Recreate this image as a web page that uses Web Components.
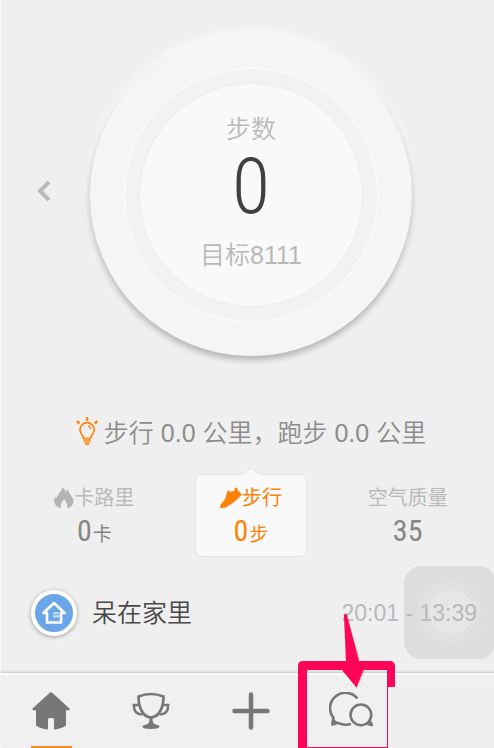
<!DOCTYPE html>
<html lang="zh-CN">
<head>
<meta charset="utf-8">
<meta name="viewport" content="width=device-width, initial-scale=1">
<title>步数</title>
<style>
  html { background: #efefef; --digits: "Liberation Sans Narrow", "Roboto Condensed", "Open Sans Condensed", "Noto Sans ExtraCondensed", "Noto Sans Condensed", "Roboto", sans-serif; }
  body { margin: 0; overflow-x: hidden; overflow-y: hidden; }
</style>
</head>
<body>
<step-app></step-app>
<script>
const define = (name, html) => customElements.define(name, class extends HTMLElement {
  constructor() {
    super();
    const t = document.createElement('template');
    t.innerHTML = html;
    this.attachShadow({ mode: 'open' }).append(t.content.cloneNode(true));
  }
});

define('step-dial', `
<style>
  :host { display: flex; justify-content: center; }
  .outer, .groove, .face { border-radius: 50%; box-sizing: border-box; display: flex; align-items: center; justify-content: center; }
  .outer { width: 322px; aspect-ratio: 1; background: #f5f5f5; box-shadow: 0 4px 6px rgba(0,0,0,.26), 0 -3px 8px rgba(255,255,255,.9), 0 -1px 2px #fafafa; }
  .groove { width: 254px; aspect-ratio: 1; background: #f2f2f2; border: 1px solid #fdfdfd; }
  .face { width: 224px; aspect-ratio: 1; background: #f9f9f9; border: 1px solid #ececec; flex-direction: column; padding-bottom: 6px; color: #b9b9b9; font-size: 25px; line-height: 36px; font-weight: 350; }
  .value { color: #404040; font: 300 78px/76px var(--digits); padding: 2px 0 12px; }
</style>
<div class="outer"><div class="groove"><div class="face">
  <slot name="label"></slot><span class="value"><slot></slot></span><slot name="goal"></slot>
</div></div></div>`);

define('tip-line', `
<style>
  :host { display: flex; align-items: center; justify-content: center; gap: 6px; color: #8c8c8c; font-size: 25px; line-height: 36px; font-weight: 350; white-space: nowrap; }
  svg { flex: none; margin-bottom: 4px; }
</style>
<svg width="22" height="28" viewBox="0 0 22 28" fill="none" stroke="#ff8208" stroke-width="1.7">
  <path d="M7.6 21.5C7.6 18.5 4 17 4 12.8a7.1 7.1 0 0 1 14.2 0c0 4.2-3.8 5.700-3.800 8.700z"/>
  <path d="M12 9.200q2.500.5 2.800 3" stroke-width="1.300"/>
  <path d="M7.300 23.200h7.600M7.800 25.200h6.600M9 27h4.200" stroke-width="1.300"/>
  <path d="M11.100.3v3.400M.9 4.200l2.600 2.300M21.300 4.200l-2.600 2.300" stroke-width="2.400"/>
</svg><slot></slot>`);

define('metric-tile', `
<style>
  :host { display: flex; justify-content: center; }
  button { position: relative; box-sizing: border-box; width: 112px; height: 83px; padding: 9px 0 0; border: 1px solid transparent; border-radius: 7px; background: none; font: inherit; color: #b9b9b9; display: flex; flex-direction: column; align-items: center; white-space: nowrap; }
  .label { display: flex; align-items: center; font-size: 20px; line-height: 28px; }
  .value { display: flex; align-items: baseline; color: #858585; font-size: 19px; line-height: 38px; gap: 1px; }
  .num { font: 400 30px/38px var(--digits); }
  :host([active]) button { background: #f9f9f9; border-color: #e4e4e4; color: #ff8208; }
  :host([active]) .value { color: #ff8208; }
  .tip { display: none; position: absolute; top: -7px; left: 46px; }
  :host([active]) .tip { display: block; }
</style>
<button type="button">
  <svg class="tip" width="18" height="8" viewBox="0 0 18 8"><path d="M0 7 8 .8q1-.6 2 0L18 7v1H0z" fill="#f9f9f9"/><path d="M0 6.500 8 .8q1-.6 2 0L18 6.500" fill="none" stroke="#e4e4e4"/></svg>
  <span class="label"><slot name="icon"></slot><slot></slot></span>
  <span class="value"><span class="num"><slot name="num"></slot></span><slot name="unit"></slot></span>
</button>`);

define('place-row', `
<style>
  :host { position: relative; z-index: 1; display: flex; align-items: center; color: #484848; font-size: 25px; line-height: 36px; font-weight: 350; }
  .badge { flex: none; box-sizing: border-box; width: 46px; height: 46px; margin-right: 15px; border: 4px solid #fff; border-radius: 50%; background: #6ba7e8; box-shadow: 0 1px 4px rgba(0,0,0,.35); display: flex; align-items: center; justify-content: center; }
  .time { margin-left: auto; color: #b9b9b9; font: 400 23px/36px "Liberation Sans", sans-serif; white-space: nowrap; }
</style>
<span class="badge"><svg width="24" height="24" viewBox="0 0 24 24" fill="none" stroke="#fff" stroke-width="2.600" stroke-linejoin="round">
  <path d="M1.500 12 12 2l10.500 10H19v9.500H5V12z"/>
  <path d="M11.500 11.300h2v2h-2zM14.500 11.300h2v2h-2zM11.500 14.300h2v2h-2zM14.500 14.300h2v2h-2z" fill="#fff" stroke="none"/>
</svg></span>
<slot></slot><span class="time"><slot name="time"></slot></span>`);

define('nav-item', `
<style>
  :host { display: flex; min-width: 0; }
  button { flex: 1; min-width: 0; padding: 19px 0 0; border: 0; background: none; display: flex; flex-direction: column; align-items: center; color: #777; }
  button::after { content: ""; width: 41px; height: 2px; margin-top: auto; }
  :host([active]) button::after { background: #ee8c28; }
</style>
<button type="button"><slot></slot></button>`);

define('touch-pad', `
<style>
  :host { display: block; box-sizing: border-box; width: 90px; height: 93px; border-radius: 18px 14px 14px 18px; background: rgba(205,205,205,.55); overflow: hidden; }
</style>
<svg width="90" height="93" viewBox="0 0 90 93" fill="#fff"><circle cx="47" cy="46" r="34" fill-opacity=".06"/><circle cx="47" cy="46" r="29" fill-opacity=".08"/><circle cx="47" cy="46" r="22" fill-opacity=".18"/></svg>`);

define('callout-mark', `
<style>:host { display: block; z-index: 2; } svg { display: block; }</style>
<svg width="196" height="135" viewBox="298 613 196 135">
  <path d="M388 687H494V748H388z" fill="#efefef"/>
  <path d="M303 661H390Q395 661 395 666V687H388V748H298V666Q298 661 303 661zM307 670V747H387V670z" fill="#ff0558" fill-rule="evenodd"/>
  <path d="M344 616q1.500-4 3 0L360.500 661H369L357 689 342 669.500l4-3z" fill="#777" opacity=".3"/>
  <path d="M344 615q1.500-3 3 0L359 661H368L363.500 670 356.500 687.500 341.500 669.500 346 661z" fill="#ff0558"/>
</svg>`);

define('step-app', `
<style>
  :host { display: flex; flex-direction: column; min-height: 100vh; box-sizing: border-box; border-left: 1px solid #fafafa; background: #efefef; font-family: "Liberation Sans", "Noto Sans CJK SC", sans-serif; }
  main { flex: 1; display: flex; flex-direction: column; padding: 34px 8px 0 15px; }
  .hero { display: grid; grid-template-columns: 1fr auto 1fr; align-items: center; }
  .back { justify-self: start; margin: 0 0 8px 20px; padding: 0; border: 0; background: none; line-height: 0; }
  tip-line { margin-top: 59px; }
  .tiles { display: grid; grid-template-columns: repeat(3, 1fr); margin-top: 23px; }
  .foot { position: relative; margin-top: 33px; padding: 0 9px 0 15px; }
  touch-pad { position: absolute; right: -8px; top: -24px; }
  nav { position: relative; display: grid; grid-template-columns: 100fr 100fr 100fr 100fr 93fr; height: 75px; border-top: 1px solid #cfcfcf; box-shadow: inset 0 2px #fbfbfb, 0 -1px 2px rgba(0,0,0,.08); background: #f0f0f0; }
  callout-mark { position: absolute; right: 0; bottom: 0; pointer-events: none; }
  svg { display: block; flex: none; }
</style>
<main>
  <div class="hero">
    <button class="back" type="button" aria-label="前一天"><svg width="16" height="24" viewBox="0 0 16 24"><path d="M13 3 4 12l9 9" fill="none" stroke="#b9b9b9" stroke-width="4"/></svg></button>
    <step-dial><span slot="label">步数</span>0<span slot="goal">目标8111</span></step-dial>
    <span></span>
  </div>
  <tip-line>步行 0.0 公里，跑步 0.0 公里</tip-line>
  <div class="tiles">
    <metric-tile>
      <svg slot="icon" width="20" height="22" viewBox="0 0 20 22"><path d="M8 0c2 1.500 3 3 4 5 .8-.8 1-1.500.8-2.800 2.500 2 2.400 4.300 4.200 6.300 5 5.500 1.500 12-4 12.500 1-3-.5-6-3-9-2 3-4 6-3 9C1.500 20.500-1.500 14.500 1 9.500c.5 1.200 1 1.700 1.800 1.500C3 7 8 5.500 8 0z" fill="#b3b3b3"/></svg>
      卡路里<span slot="num">0</span><span slot="unit">卡</span>
    </metric-tile>
    <metric-tile active>
      <svg slot="icon" width="22" height="22" viewBox="0 0 22 22"><path d="M0 20c0-2.500 2-3.500 4-6.500C6 10.500 6.500 7 7.500 3.500l1.500.3.500.9 5-.6L14.800.5 17 1l1.300 3L21.800 7c-.8 2-3.300 4-6 6.500-3.300 3-5.800 4.500-8.300 6-3 1.700-7.500 2-7.500.5z" fill="#ff8208"/></svg>
      步行<span slot="num">0</span><span slot="unit">步</span>
    </metric-tile>
    <metric-tile>空气质量<span slot="num">35</span></metric-tile>
  </div>
  <div class="foot">
    <place-row>呆在家里<span slot="time">20:01 - 13:39</span></place-row>
    <touch-pad></touch-pad>
  </div>
</main>
<nav>
  <nav-item active aria-label="首页"><svg width="38" height="38" viewBox="0 0 38 38" fill="#777"><path d="M17.500 1q1.500-1.400 3 0L37.500 16.500q.8 1.500-.8 1.800H34V33.500q-4 3.200-12 4V27.500q0-1.500-1.500-1.500H17.500q-1.500 0-1.500 1.500v10q-8-.8-12-4V18.300H1.300Q-.3 18 .5 16.500z"/></svg></nav-item>
  <nav-item aria-label="成就"><svg width="38" height="38" viewBox="0 0 38 38" fill="none" stroke="#777" stroke-width="2.700"><path d="M6.500 4.500Q19-.5 31.500 4.500C31.500 15 27.500 25 19 25.500 10.500 25 6.500 15 6.500 4.500z"/><path d="M6.500 13H1.800c0 6 2.500 9.500 8.500 9.500M31.500 13h4.700c0 6-2.500 9.500-8.500 9.500" stroke-width="2.500"/><path d="M17.500 25h3c0 5 .8 7 3 7.500 6 .8 6 4.500-4.500 4.500s-10.500-3.700-4.500-4.500c2.200-.5 3-2.500 3-7.500z" fill="#777" stroke="none"/></svg></nav-item>
  <nav-item aria-label="添加"><svg width="38" height="38" viewBox="0 0 38 38"><path d="M19 2.500v33M2.500 19h33" stroke="#777" stroke-width="4.500" stroke-linecap="round"/></svg></nav-item>
  <nav-item aria-label="消息"><svg width="44" height="36" viewBox="0 0 44 36" fill="none" stroke="#777" stroke-width="2.600" stroke-linejoin="round"><path d="M28.500 6.500A15.300 15.300 0 0 0 4.500 26L3.500 32.500 9 30.800Q15 34 22 32"/><path d="M3.300 26.500 3 33l6-2z" fill="#777" stroke-width="1"/><path d="M40.500 28.500A10.300 10.300 0 1 0 37.500 31.500L43 33z"/><path d="M41.500 27v6.500l-5-2z" fill="#777" stroke-width="1"/></svg></nav-item>
  <nav-item aria-label="我的"></nav-item>
  <callout-mark></callout-mark>
</nav>`);
</script>
</body>
</html>
